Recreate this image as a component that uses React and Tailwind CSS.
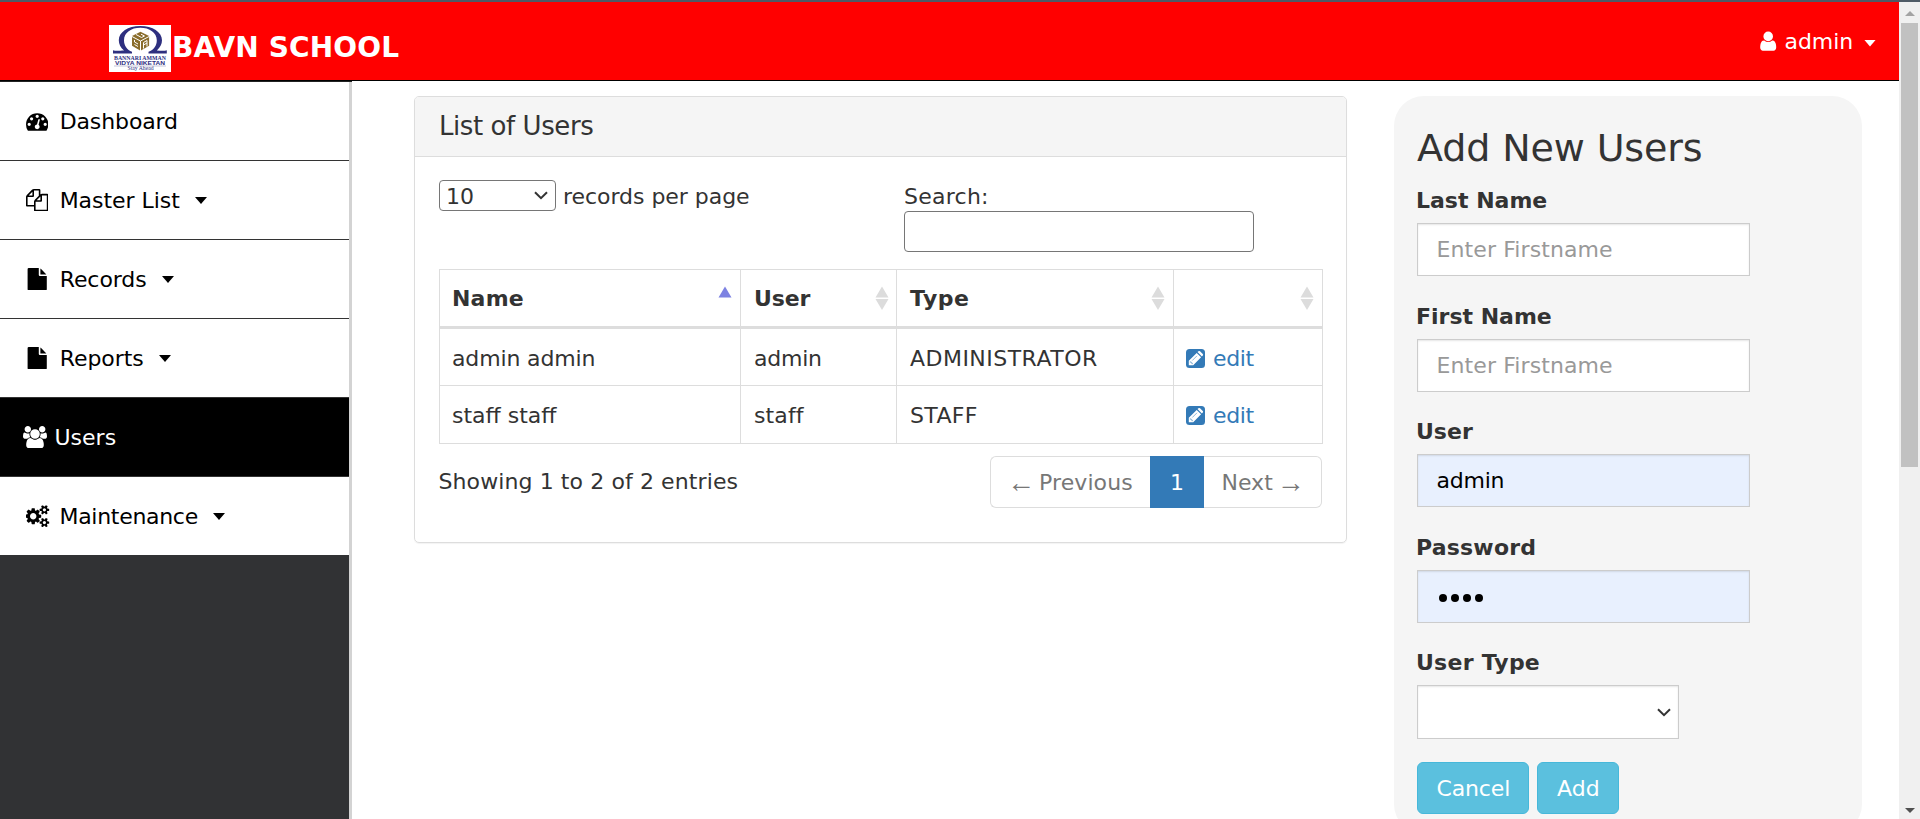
const ICONS = {
  user: "M1536 1399q0 109-62.5 187t-150.5 78h-854q-88 0-150.5-78t-62.5-187q0-85 8.5-160.5t31.5-152 58.5-131 94-89 134.5-34.5q131 128 313 128t313-128q76 0 134.5 34.5t94 89 58.5 131 31.5 152 8.5 160.5zm-256-887q0 159-112.5 271.5t-271.5 112.5-271.5-112.5-112.5-271.5 112.5-271.5 271.5-112.5 271.5 112.5 112.5 271.5z",
  dashboard: "M384 1152q0-53-37.5-90.5t-90.5-37.5-90.5 37.5-37.5 90.5 37.5 90.5 90.5 37.5 90.5-37.5 37.5-90.5zm192-448q0-53-37.5-90.5t-90.5-37.5-90.5 37.5-37.5 90.5 37.5 90.5 90.5 37.5 90.5-37.5 37.5-90.5zm428 481l101-382q6-26-7.5-48.5t-38.5-29.5-48 6.5-30 39.5l-101 382q-60 5-107 43.5t-63 98.5q-20 77 20 146t117 89 146-20 89-117q16-60-6-117t-72-91zm660-33q0-53-37.5-90.5t-90.5-37.5-90.5 37.5-37.5 90.5 37.5 90.5 90.5 37.5 90.5-37.5 37.5-90.5zm-640-640q0-53-37.5-90.5t-90.5-37.5-90.5 37.5-37.5 90.5 37.5 90.5 90.5 37.5 90.5-37.5 37.5-90.5zm448 192q0-53-37.5-90.5t-90.5-37.5-90.5 37.5-37.5 90.5 37.5 90.5 90.5 37.5 90.5-37.5 37.5-90.5zm320 448q0 261-141 483-19 29-54 29h-1402q-35 0-54-29-141-221-141-483 0-182 71-348t191-286 286-191 348-71 348 71 286 191 191 286 71 348z",
  files: "M1696 384q40 0 68 28t28 68v1216q0 40-28 68t-68 28h-960q-40 0-68-28t-28-68v-288h-544q-40 0-68-28t-28-68v-672q0-40 20-88t48-76l408-408q28-28 76-48t88-20h416q40 0 68 28t28 68v328q68-40 128-40h416zm-544 213l-299 299h299v-299zm-640-384l-299 299h299v-299zm196 647l316-316v-416h-384v416q0 40-28 68t-68 28h-416v640h512v-256q0-40 20-88t48-76zm956 804v-1152h-384v416q0 40-28 68t-68 28h-416v640h896z",
  file: "M1152 512v-472q22 14 36 28l408 408q14 14 28 36h-472zm-128 32q0 40 28 68t68 28h544v1056q0 40-28 68t-68 28h-1344q-40 0-68-28t-28-68v-1600q0-40 28-68t68-28h800v544z",
  group: "M593 896q-162 5-265 128h-134q-82 0-138-40.5t-56-118.5q0-353 124-353 6 0 43.5 21t97.5 42.5 119 21.5q67 0 133-23-5 37-5 66 0 139 81 256zm1071 637q0 120-73 189.5t-194 69.5h-874q-121 0-194-69.5t-73-189.5q0-53 3.5-103.5t14-109 26.5-108.5 43-97.5 62-81 85.5-53.5 111.5-20q10 0 43 21.5t73 48 107 48 135 21.5 135-21.5 107-48 73-48 43-21.5q61 0 111.5 20t85.5 53.5 62 81 43 97.5 26.5 108.5 14 109 3.5 103.5zm-1024-1277q0 106-75 181t-181 75-181-75-75-181 75-181 181-75 181 75 75 181zm704 384q0 159-112.5 271.5t-271.5 112.5-271.5-112.5-112.5-271.5 112.5-271.5 271.5-112.5 271.5 112.5 112.5 271.5zm576 225q0 78-56 118.5t-138 40.5h-134q-103-123-265-128 81-117 81-256 0-29-5-66 66 23 133 23 59 0 119-21.5t97.5-42.5 43.5-21q124 0 124 353zm-128-609q0 106-75 181t-181 75-181-75-75-181 75-181 181-75 181 75 75 181z",
  cogs: "M832 896q0-106-75-181t-181-75-181 75-75 181 75 181 181 75 181-75 75-181zm768 512q0-52-38-90t-90-38-90 38-38 90q0 53 37.5 90.5t90.5 37.5 90.5-37.5 37.5-90.5zm0-1024q0-52-38-90t-90-38-90 38-38 90q0 53 37.5 90.5t90.5 37.5 90.5-37.5 37.5-90.5zm-384 421v185q0 10-7 19.5t-16 10.5l-155 24q-11 35-32 76 34 48 90 115 7 11 7 20 0 12-7 19-23 30-82.5 89.5t-78.5 59.5q-11 0-21-7l-115-90q-37 19-77 31-11 108-23 155-7 24-30 24h-186q-11 0-20-7.5t-10-17.5l-23-153q-34-10-75-31l-118 89q-7 7-20 7-11 0-21-8-144-133-144-160 0-9 7-19 10-14 41-53t47-61q-23-44-35-82l-152-24q-10-1-17-9.5t-7-19.5v-185q0-10 7-19.5t16-10.5l155-24q11-35 32-76-34-48-90-115-7-11-7-20 0-12 7-20 22-30 82-89t79-59q11 0 21 7l115 90q34-18 77-32 11-108 23-154 7-24 30-24h186q11 0 20 7.5t10 17.5l23 153q34 10 75 31l118-89q8-7 20-7 11 0 21 8 144 133 144 160 0 8-7 19-12 16-42 54t-45 60q23 48 34 82l152 23q10 2 17 10.5t7 19.5zm640 533v140q0 16-149 31-12 27-30 52 51 113 51 138 0 4-4 7-122 71-124 71-8 0-46-47t-52-68q-20 2-30 2t-30-2q-14 21-52 68t-46 47q-2 0-124-71-4-3-4-7 0-25 51-138-18-25-30-52-149-15-149-31v-140q0-16 149-31 13-29 30-52-51-113-51-138 0-4 4-7 4-2 35-20t59-34 30-16q8 0 46 46.5t52 67.5q20-2 30-2t30 2q51-71 92-112l6-2q4 0 124 70 4 3 4 7 0 25-51 138 17 23 30 52 149 15 149 31zm0-1024v140q0 16-149 31-12 27-30 52 51 113 51 138 0 4-4 7-122 71-124 71-8 0-46-47t-52-68q-20 2-30 2t-30-2q-14 21-52 68t-46 47q-2 0-124-71-4-3-4-7 0-25 51-138-18-25-30-52-149-15-149-31v-140q0-16 149-31 13-29 30-52-51-113-51-138 0-4 4-7 4-2 35-20t59-34 30-16q8 0 46 46.5t52 67.5q20-2 30-2t30 2q51-71 92-112l6-2q4 0 124 70 4 3 4 7 0 25-51 138 17 23 30 52 149 15 149 31z",
};

function Icon({ name, wide = false, className }) {
  return (
    <svg viewBox={wide ? "0 0 1920 1792" : "0 0 1792 1792"} className={className} fill="currentColor">
      <path d={ICONS[name]} />
    </svg>
  );
}

function Caret({ className }) {
  return (
    <svg viewBox="0 0 12 7" className={className} fill="currentColor">
      <path d="M0 0h12L6 7z" />
    </svg>
  );
}

function Chevron({ className }) {
  return (
    <svg viewBox="0 0 14 9" className={className} fill="none" stroke="currentColor" strokeWidth="2">
      <path d="M1 1.2l6 6 6-6" />
    </svg>
  );
}

function Logo() {
  return (
    <svg viewBox="0 0 62 47" className="h-[47px] w-[62px] shrink-0 overflow-visible">
      <path fill="#fff" d="M0 0h62v47H0z" />
      <path
        fill="#2e2f7f"
        d="M4 25.2C6 26 9 25.9 15 25.6 11.500 22.500 9.800 19 9.800 15.300 9.800 7 19 1 31.300 1S53 7 53 15.300c0 3.700-1.700 7-5.200 10.300 5 .3 8 .4 10-.4v3.300H39.500v-1.700c5.400-2 8.300-6 8.300-11.500C47.800 7.500 40.500 2.700 31.300 2.700S15 7.500 15 15.300c0 5.500 3 9.500 8 11.500v1.700H4z"
      />
      <path fill="#8a6d2c" d="M31.500 6.800l8.600 4.200v9.800l-8.600 5-8.500-5V11z" />
      <path
        fill="none"
        stroke="#fff"
        strokeWidth="1"
        d="M23 11.500l8.500 4.500 8.600-4.500M31.500 16v10M27 9.500l5.500 3 3-1.500-3.500-1.800M25.500 15v2l3.500 2M25.500 19.500l3.500 2M34.500 23.500v-6l3.500-2v6M34.500 20l3.500-2"
      />
      <g fill="#2e2f7f">
        <text x="5" y="34.600" fontFamily="Liberation Serif" fontWeight="bold" fontSize="6.400" textLength="52" lengthAdjust="spacingAndGlyphs">BANNARI AMMAN</text>
        <text x="6" y="40" fontFamily="Liberation Sans" fontWeight="bold" fontSize="5.800" textLength="50" lengthAdjust="spacingAndGlyphs">VIDYA NIKETAN</text>
        <text x="18.500" y="45" fontFamily="Liberation Serif" fontSize="5.400" textLength="26" lengthAdjust="spacingAndGlyphs">Stay Ahead</text>
      </g>
      <path stroke="#8a8ab0" strokeWidth=".5" d="M5 41h52" />
    </svg>
  );
}

function EditIcon() {
  return (
    <svg viewBox="0 0 19 19" className="mt-[3px] h-[19px] w-[19px] shrink-0">
      <rect width="19" height="19" rx="3.500" fill="#337ab7" />
      <path fill="#fff" d="M2.800 16.200v-4.400l7.900-7.900 4.400 4.400-7.900 7.900zM11.500 3.100l.9-.9q.8-.6 1.600 0l2.800 2.800q.7.800 0 1.600l-.9.900z" />
      <path stroke="#337ab7" strokeWidth=".55" fill="none" d="M6.300 11.500l4.700-4.700M3.800 12.900h1.300v1.100h1.200v1.200" />
    </svg>
  );
}

function SortIcon({ active = false }) {
  return (
    <svg viewBox="0 0 14 24" className="mt-4 h-6 w-3.5 shrink-0">
      <path d="M.5 11.500L7 .5l6.500 11z" fill={active ? "#7d82e2" : "#dcdcdc"} />
      {!active && <path d="M.5 13L7 24l6.500-11z" fill="#dcdcdc" />}
    </svg>
  );
}

const NAV = [
  { label: "Dashboard", icon: "dashboard", track: "tracking-[-0.120px]" },
  { label: "Master List", icon: "files", track: "tracking-[-0.046px]", caret: "ml-[15px]" },
  { label: "Records", icon: "file", track: "tracking-[-0.080px]", caret: "ml-[15.500px]" },
  { label: "Reports", icon: "file", track: "tracking-[-0.060px]", caret: "ml-[15.500px]" },
  { label: "Users", icon: "group", track: "", active: true },
  { label: "Maintenance", icon: "cogs", track: "tracking-[-0.300px]", caret: "ml-[15.500px]" },
];

function NavItem({ item, last }) {
  const wide = item.icon === "group" || item.icon === "cogs";
  return (
    <div
      className={
        "flex items-start " +
        (last ? "h-[78px] " : "h-[79px] border-b border-[#333] ") +
        (item.active ? "bg-black pl-[23px] text-white" : "bg-white pl-[26px] text-black")
      }
    >
      <Icon name={item.icon} wide={wide} className={wide ? "mt-7 h-[22.400px] w-6 shrink-0" : "mt-7 h-[22.400px] w-[22.400px] shrink-0"} />
      <span className={"mt-[27px] " + (item.active ? "ml-[7.500px] " : wide ? "ml-[9.500px] " : "ml-[11.300px] ") + item.track}>{item.label}</span>
      {item.caret && <Caret className={"mt-9 h-[7px] w-3 " + item.caret} />}
    </div>
  );
}

const COLS = "grid grid-cols-[301px_156px_277px_149px]";
const USERS = [
  { name: "admin admin", nameTrack: "tracking-[-0.142px]", user: "admin", userTrack: "tracking-[-0.247px]", type: "ADMINISTRATOR", typeTrack: "tracking-[0.475px]" },
  { name: "staff staff", nameTrack: "", user: "staff", userTrack: "tracking-[0.108px]", type: "STAFF", typeTrack: "tracking-[0.350px]" },
];

function UserTable() {
  return (
    <div className="w-[884px] border-l border-t border-[#ddd]">
      <div className={COLS + " h-[59px] border-b-[3px] border-[#ddd] font-bold"}>
        <div className="flex justify-between border-r border-[#ddd] pl-3 pr-2">
          <span className="mt-4 tracking-[0.200px]">Name</span>
          <SortIcon active />
        </div>
        <div className="flex justify-between border-r border-[#ddd] pl-[13px] pr-[7px]">
          <span className="mt-4 tracking-[-0.127px]">User</span>
          <SortIcon />
        </div>
        <div className="flex justify-between border-r border-[#ddd] pl-[13px] pr-2">
          <span className="mt-4 tracking-[0.505px]">Type</span>
          <SortIcon />
        </div>
        <div className="flex justify-end border-r border-[#ddd] pr-2">
          <SortIcon />
        </div>
      </div>
      {USERS.map((u, i) => (
        <div key={u.user} className={COLS + " border-b border-[#ddd] " + (i === 0 ? "h-[57px]" : "h-[58px]")}>
          <div className={"border-r border-[#ddd] pl-3 pt-[17px] " + u.nameTrack}>{u.name}</div>
          <div className={"border-r border-[#ddd] pl-[13px] pt-[17px] " + u.userTrack}>{u.user}</div>
          <div className={"border-r border-[#ddd] pl-[13px] pt-[17px] " + u.typeTrack}>{u.type}</div>
          <div className="flex items-start border-r border-[#ddd] pl-3 pt-[17px] text-[#337ab7]">
            <EditIcon />
            <span className="ml-2 tracking-[-0.371px]">edit</span>
          </div>
        </div>
      ))}
    </div>
  );
}

const FIELD = "mt-[10px] flex h-[53px] w-[333px] items-start border border-[#ccc] pl-[18.500px] pt-[13px] shadow-[inset_0_1px_2px_rgba(0,0,0,0.1)] ";

export default function App() {
  return (
    <div className="flex h-[819px] w-[1920px] flex-col overflow-hidden bg-white font-['DejaVu_Sans',Verdana,sans-serif] text-[22px] leading-[25px] text-[#333]">
      <div className="h-0.5 shrink-0 bg-[#4f5b66]" />
      <div className="flex min-h-0 flex-1">
        <div className="flex w-[1899px] flex-col">
          <header className="flex h-[79px] shrink-0 items-start border-b border-black bg-[#f00] pl-[109px] text-white">
            <div className="mt-[23px]">
              <Logo />
            </div>
            <h1 className="ml-px mt-[29px] text-[28px] font-bold leading-[33px] tracking-[0.150px]">BAVN SCHOOL</h1>
            <div className="ml-auto flex items-start pr-[23px]">
              <Icon name="user" className="mt-[27.500px] h-[22.400px] w-[22.400px]" />
              <span className="ml-[5.500px] mt-[27px] tracking-[-0.100px]">admin</span>
              <Caret className="ml-[11px] mt-[38px] h-[6.500px] w-3" />
            </div>
          </header>
          <div className="flex min-h-0 flex-1">
            <aside className="w-[352px] shrink-0 border-t border-[#222]">
              <div className="h-full border-r-[3px] border-[#d3d3d3] bg-[#313234]">
                {NAV.map((item, i) => (
                  <NavItem key={item.label} item={item} last={i === NAV.length - 1} />
                ))}
              </div>
            </aside>
            <main className="flex min-w-0 flex-1 items-start pl-[62px] pt-[15px]">
              <section className="h-[447px] w-[933px] shrink-0 rounded-[5px] border border-[#ddd] shadow-[0_1px_1px_rgba(0,0,0,0.05)]">
                <div className="h-[60px] rounded-t-[4px] border-b border-[#ddd] bg-[#f5f5f5] pl-6 pt-[14px] text-[26px] leading-[30px] tracking-[-0.430px]">List of Users</div>
                <div className="pl-6 pt-[23px]">
                  <div className="flex h-[89px] items-start">
                    <div className="flex h-[31px] w-[117px] items-start justify-between rounded-[4px] border border-[#767676] pl-[6px] pr-[7px]">
                      <span className="mt-[3px]">10</span>
                      <Chevron className="mt-[10px] h-[9px] w-3.5" />
                    </div>
                    <span className="ml-[7px] mt-1 tracking-[-0.040px]">records per page</span>
                    <div className="ml-auto mr-[92px] mt-1">
                      <div className="tracking-[0.250px]">Search:</div>
                      <div className="mt-[2px] h-[41px] w-[350px] rounded-[4px] border border-[#767676] bg-white" />
                    </div>
                  </div>
                  <UserTable />
                  <div className="flex w-[883px] items-start justify-between">
                    <span className="-ml-[0.500px] mt-[25px] tracking-[0.100px]">Showing 1 to 2 of 2 entries</span>
                    <div className="mt-3 flex h-[52px] text-[#777]">
                      <div className="flex items-start rounded-l-[6px] border border-r-0 border-[#ddd] pl-[16px] pt-[13px]">
                        <span className="w-[28px] font-['Liberation_Sans'] text-[28px]">←</span>
                        <span className="ml-[4px] w-[111px] tracking-[0.100px]">Previous</span>
                      </div>
                      <div className="w-[54px] bg-[#337ab7] pl-5 pt-[14px] text-white">1</div>
                      <div className="flex w-[118px] items-start rounded-r-[6px] border border-l-0 border-[#ddd] pl-[17.500px] pt-[13px]">
                        <span>Next</span>
                        <span className="ml-[4px] font-['Liberation_Sans'] text-[28px]">→</span>
                      </div>
                    </div>
                  </div>
                </div>
              </section>
              <section className="ml-[47px] h-[738px] w-[468px] shrink-0 rounded-[30px] bg-[#f5f5f5] pl-[23px] pt-[30px]">
                <h2 className="text-[38px] leading-[44px] tracking-[-0.120px]">Add New Users</h2>
                <div className="mt-[18px] -ml-px font-bold">Last Name</div>
                <div className={FIELD + "bg-white tracking-[0.100px] text-[#999]"}>Enter Firstname</div>
                <div className="mt-7 -ml-px font-bold">First Name</div>
                <div className={FIELD + "bg-white tracking-[0.100px] text-[#999]"}>Enter Firstname</div>
                <div className="mt-[27px] -ml-px font-bold">User</div>
                <div className={FIELD + "bg-[#e8f0fe] tracking-[-0.247px] text-black"}>admin</div>
                <div className="mt-7 -ml-px font-bold tracking-[0.200px]">Password</div>
                <div className={FIELD + "gap-[3.500px] bg-[#e8f0fe]"}>
                  {[0, 1, 2, 3].map((n) => (
                    <span key={n} className="relative left-[2px] mt-[9.500px] h-[8.500px] w-[8.500px] rounded-full bg-black" />
                  ))}
                </div>
                <div className="mt-[27px] -ml-px font-bold tracking-[0.250px]">User Type</div>
                <div className="mt-[10px] flex h-[54px] w-[262px] items-center justify-end border border-[#ccc] bg-white pr-[7px] shadow-[inset_0_1px_2px_rgba(0,0,0,0.1)]">
                  <Chevron className="h-[9px] w-3.5" />
                </div>
                <div className="mt-[23px] flex gap-2 text-white">
                  <div className="h-[52px] w-[112px] rounded-[6px] border border-[#46b8da] bg-[#5bc0de] pl-[18.500px] pt-[13px] tracking-[-0.150px]">Cancel</div>
                  <div className="h-[52px] w-[82px] rounded-[6px] border border-[#46b8da] bg-[#5bc0de] pl-[19px] pt-[13px]">Add</div>
                </div>
              </section>
            </main>
          </div>
        </div>
        <div className="flex w-[21px] flex-col items-center bg-[#f0f0f0]">
          <svg viewBox="0 0 10 5" className="mt-[9px] h-[5px] w-2.5" fill="#a3a3a3">
            <path d="M0 5L5 0l5 5z" />
          </svg>
          <div className="mr-px mt-[7px] h-[444px] w-[17px] bg-[#c1c1c1]" />
          <svg viewBox="0 0 10 5" className="mb-[6px] mt-auto h-[5px] w-2.5" fill="#505050">
            <path d="M0 0h10L5 5z" />
          </svg>
        </div>
      </div>
    </div>
  );
}
